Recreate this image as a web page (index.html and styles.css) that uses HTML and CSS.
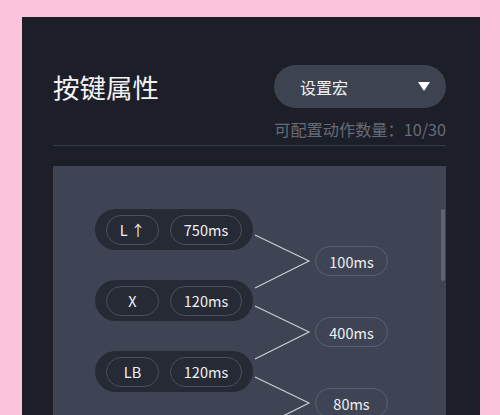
FILE: index.html
```html
<!DOCTYPE html>
<html lang="zh">
<head>
<meta charset="utf-8">
<link rel="stylesheet" href="styles.css">
</head>
<body>
<div class="panel">
  <div class="header">
    <h1 class="title">按键属性</h1>
    <div class="select">
      <span class="select-label">设置宏</span>
      <svg class="caret" width="12" height="9" viewBox="0 0 12 9"><path d="M0 0 H12 L6 9 Z" fill="#ffffff"/></svg>
    </div>
  </div>
  <div class="count">可配置动作数量：10/30</div>
  <div class="divider"></div>
  <div class="canvas">
    <div class="columns">
      <div class="actions">
        <div class="group"><span class="chip key">L ↑</span><span class="chip time">750ms</span></div>
        <div class="group"><span class="chip key">X</span><span class="chip time">120ms</span></div>
        <div class="group"><span class="chip key">LB</span><span class="chip time">120ms</span></div>
      </div>
      <div class="delays">
        <span class="delay">100ms</span>
        <span class="delay">400ms</span>
        <span class="delay">80ms</span>
      </div>
    </div>
    <svg class="links" width="393" height="250" viewBox="0 0 393 250">
      <polyline points="202,69 256,95 202,122" fill="none" stroke="#c9cdd6" stroke-width="1.2"/>
      <polyline points="202,140 256,166 202,193" fill="none" stroke="#c9cdd6" stroke-width="1.2"/>
      <polyline points="202,211 256,237 202,264" fill="none" stroke="#c9cdd6" stroke-width="1.2"/>
    </svg>
    <div class="scrollbar"></div>
  </div>
</div>
</body>
</html>
```

FILE: styles.css
```css
html, body {
  margin: 0;
  padding: 0;
}
body {
  background: #fcc3dd;
  font-family: "Noto Sans CJK SC", "Noto Sans", sans-serif;
  height: 415px;
  overflow: hidden;
}
.panel {
  margin: 17px 0 0 22px;
  width: 458px;
  height: 398px;
  box-sizing: border-box;
  background: #1d1f28;
  padding: 48px 34px 0 31px;
  display: flex;
  flex-direction: column;
}
.header {
  display: flex;
  align-items: center;
  justify-content: space-between;
}
.title {
  margin: 0;
  font-size: 26.5px;
  font-weight: 400;
  color: #f2f2f4;
  line-height: 36px;
}
.select {
  width: 172px;
  height: 43px;
  box-sizing: border-box;
  border-radius: 22px;
  background: #3d4351;
  display: flex;
  align-items: center;
  justify-content: space-between;
  padding: 0 16px 0 26px;
}
.select-label {
  color: #f2f2f4;
  font-size: 16px;
}
.caret {
  display: block;
}
.count {
  margin-top: 11px;
  text-align: right;
  color: #666b78;
  font-size: 16.2px;
  line-height: 20px;
}
.divider {
  margin-top: 6px;
  height: 1px;
  background: #363a46;
}
.canvas {
  position: relative;
  margin-top: 20px;
  flex: 1;
  background: #3e4453;
  overflow: hidden;
  padding: 43px 0 0 42px;
}
.columns {
  display: flex;
  gap: 62px;
}
.actions {
  display: flex;
  flex-direction: column;
  gap: 30px;
}
.group {
  width: 158px;
  height: 41px;
  box-sizing: border-box;
  border-radius: 21px;
  background: #262a35;
  display: flex;
  align-items: center;
  gap: 11px;
  padding-left: 11px;
}
.chip {
  height: 30px;
  box-sizing: border-box;
  border: 1px solid #4a505d;
  border-radius: 15px;
  display: flex;
  align-items: center;
  justify-content: center;
  color: #eef0f3;
  font-size: 14.5px;
}
.key {
  width: 53px;
}
.time {
  width: 72px;
}
.delays {
  display: flex;
  flex-direction: column;
  gap: 41px;
  padding-top: 37px;
}
.delay {
  width: 73px;
  height: 30px;
  box-sizing: border-box;
  border: 1px solid #5a6070;
  border-radius: 15px;
  display: flex;
  align-items: center;
  justify-content: center;
  color: #eef0f3;
  font-size: 14.5px;
}
.links {
  position: absolute;
  left: 0;
  top: 0;
}
.scrollbar {
  position: absolute;
  right: 1px;
  top: 43px;
  width: 4px;
  height: 72px;
  border-radius: 2px;
  background: #5d6372;
}
```
